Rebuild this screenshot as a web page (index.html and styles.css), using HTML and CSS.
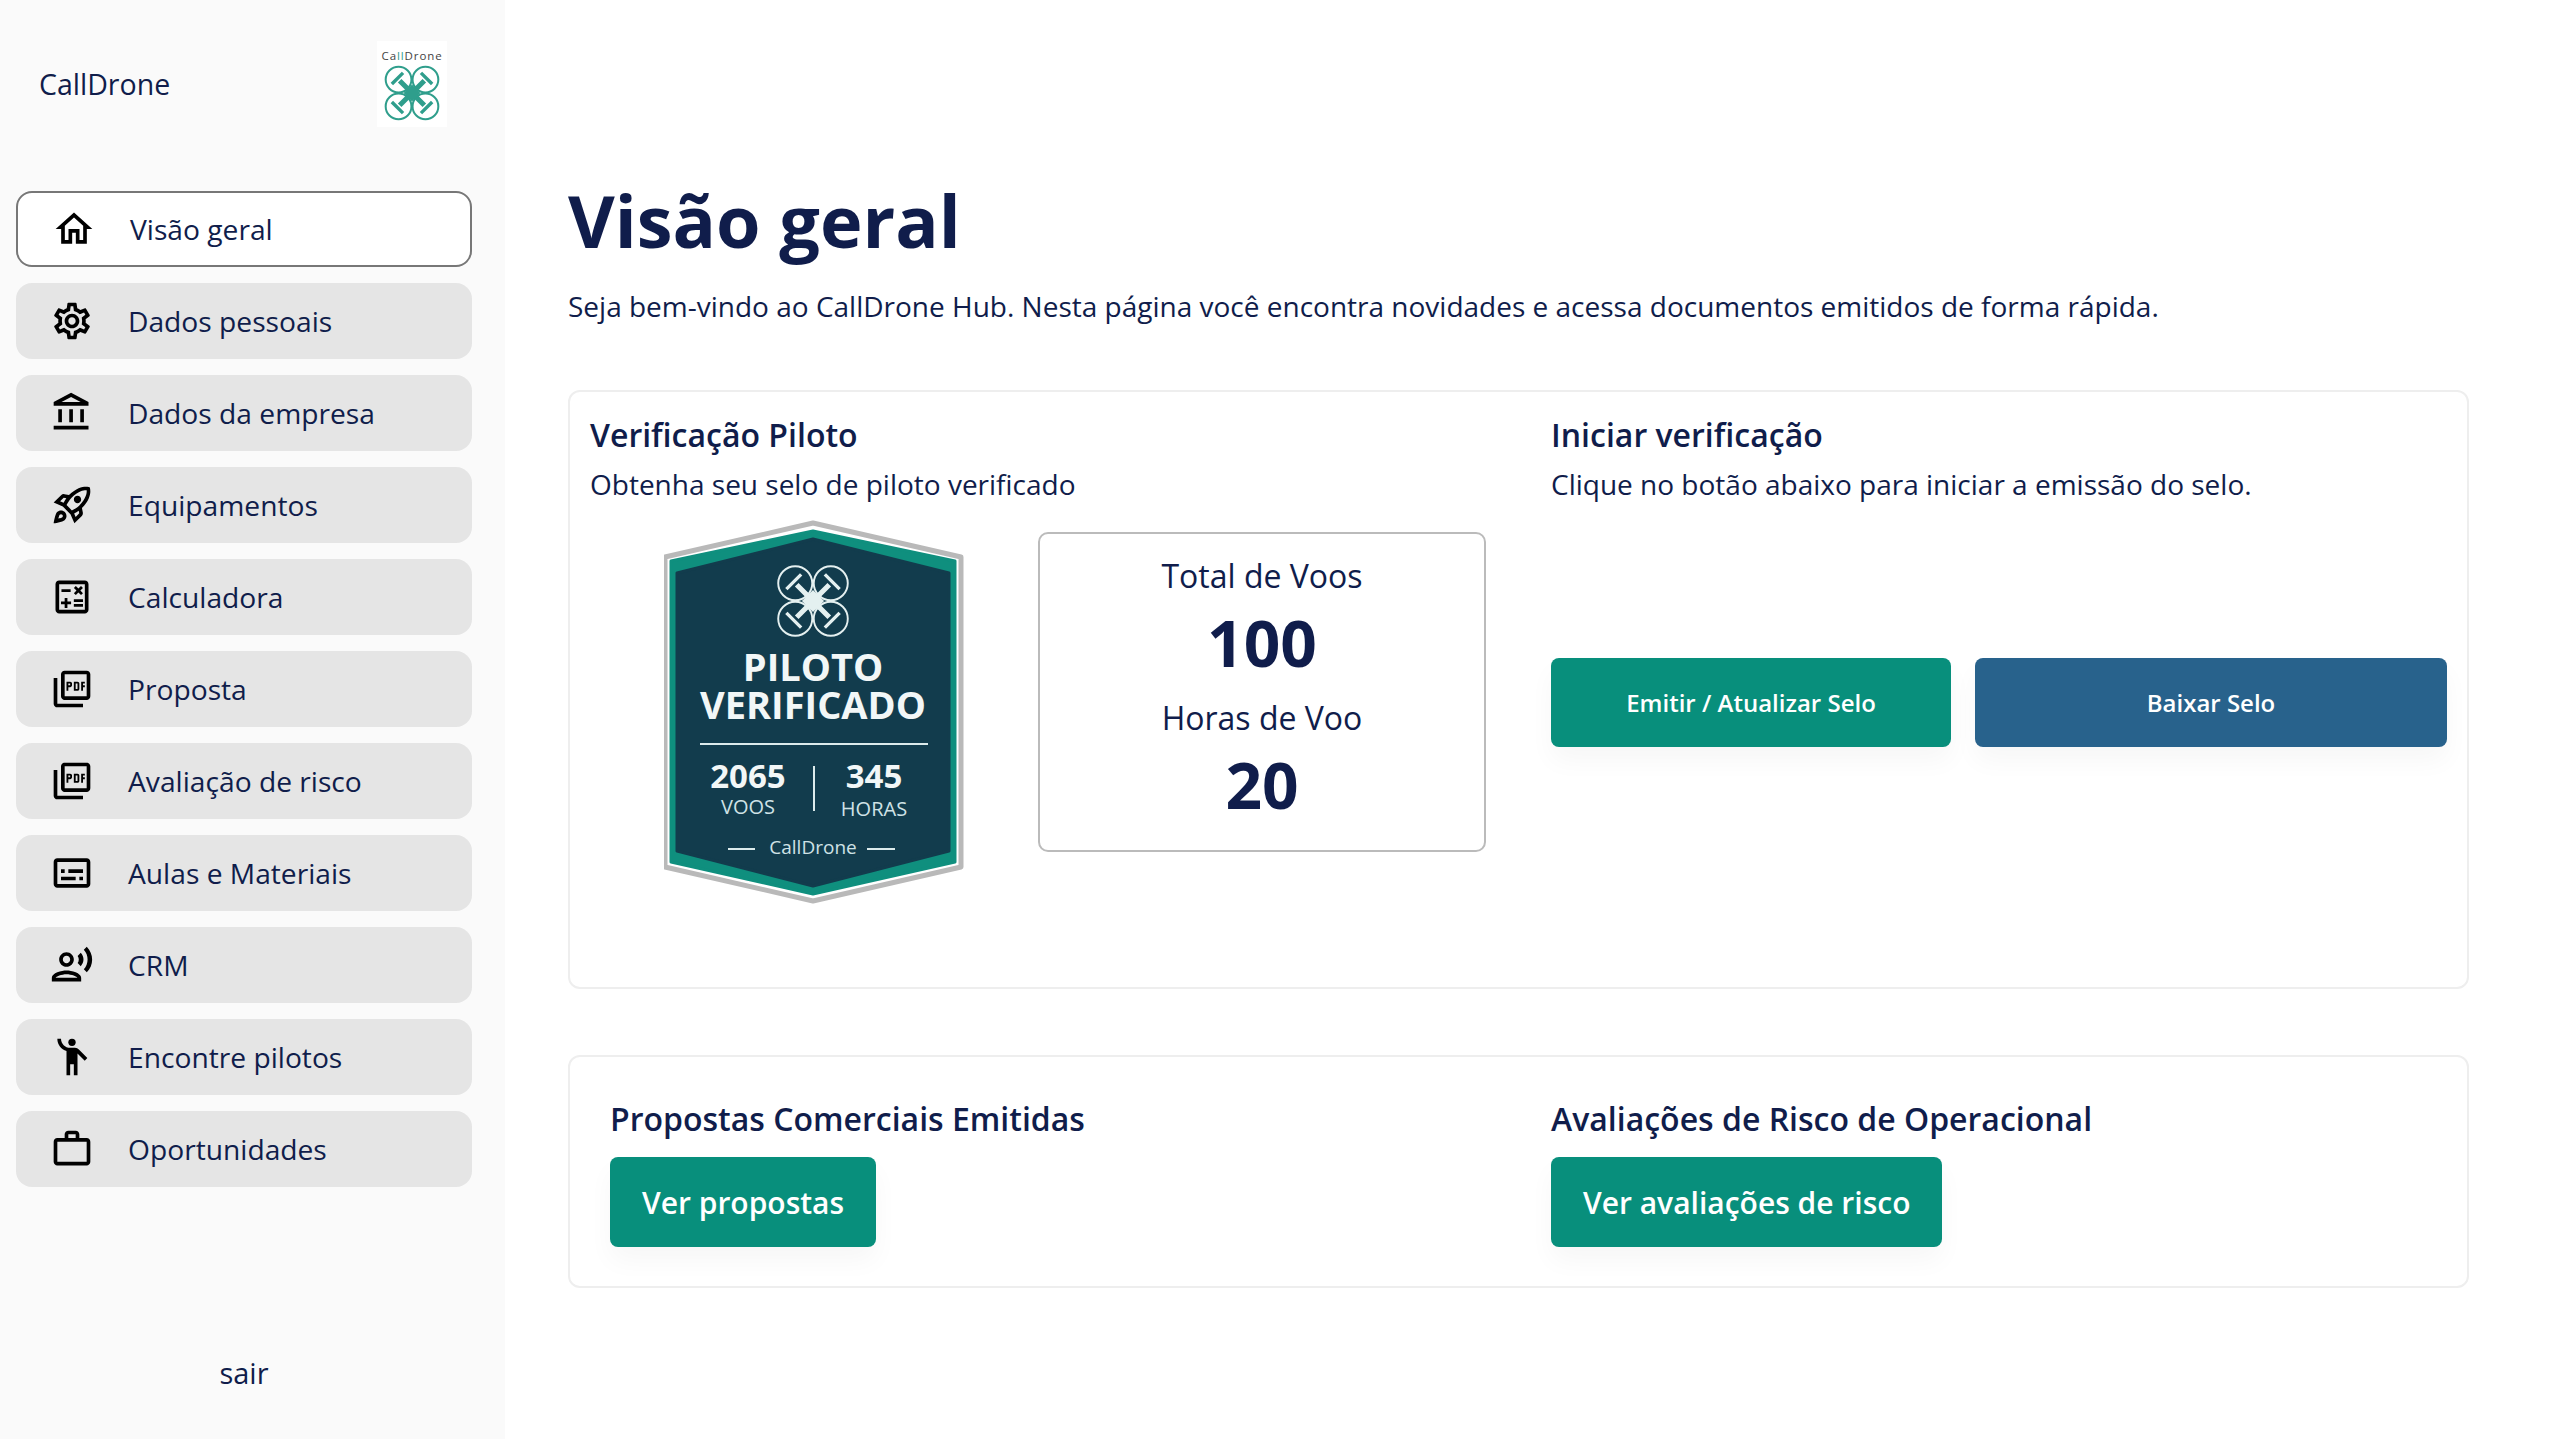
FILE: index.html
```html
<!DOCTYPE html>
<html lang="pt-BR">
<head>
  <meta charset="UTF-8">
  <meta name="viewport" content="width=device-width, initial-scale=1.0">
  <title>CallDrone Hub</title>
  <link rel="stylesheet" href="styles.css">
</head>
<body>
  <svg class="defs" width="0" height="0">
    <symbol id="drone" viewBox="0 0 100 100">
      <g fill="none" stroke="currentColor">
        <circle class="drone-ring" cx="26" cy="26" r="23"/>
        <circle class="drone-ring" cx="74" cy="26" r="23"/>
        <circle class="drone-ring" cx="26" cy="74" r="23"/>
        <circle class="drone-ring" cx="74" cy="74" r="23"/>
        <path class="drone-arm" d="M28 28L72 72M72 28L28 72"/>
        <path class="drone-blade" d="M14 34L34 14M66 14L86 34M14 66L34 86M66 86L86 66"/>
      </g>
      <path d="M50 35L65 50L50 65L35 50Z" fill="currentColor"/>
    </symbol>
  </svg>

  <div class="layout">
    <aside class="sidebar">
      <div class="brand">
        <span class="brand-name">CallDrone</span>
        <div class="logo">
          <span class="logo-text">Ca<b>ll</b>Drone</span>
          <svg class="logo-drone"><use href="#drone"/></svg>
        </div>
      </div>

      <nav class="nav">
        <a class="nav-item active">
          <svg class="icon" viewBox="0 0 24 24"><path d="M12 5.69l5 4.5V18h-2v-6H9v6H7v-7.81l5-4.5M12 3L2 12h3v8h6v-6h2v6h6v-8h3L12 3z"/></svg>
          Visão geral
        </a>
        <a class="nav-item">
          <svg class="icon" viewBox="0 0 24 24"><path d="M19.43 12.98c.04-.32.07-.64.07-.98 0-.34-.03-.66-.07-.98l2.11-1.65c.19-.15.24-.42.12-.64l-2-3.46c-.09-.16-.26-.25-.44-.25-.06 0-.12.01-.17.03l-2.49 1c-.52-.4-1.08-.73-1.69-.98l-.38-2.65C14.46 2.18 14.25 2 14 2h-4c-.25 0-.46.18-.49.42l-.38 2.65c-.61.25-1.17.59-1.69.98l-2.49-1c-.06-.02-.12-.03-.18-.03-.17 0-.34.09-.43.25l-2 3.46c-.13.22-.07.49.12.64l2.11 1.65c-.04.32-.07.65-.07.98 0 .33.03.66.07.98l-2.11 1.65c-.19.15-.24.42-.12.64l2 3.46c.09.16.26.25.44.25.06 0 .12-.01.17-.03l2.49-1c.52.4 1.08.73 1.69.98l.38 2.65c.03.24.24.42.49.42h4c.25 0 .46-.18.49-.42l.38-2.65c.61-.25 1.17-.59 1.69-.98l2.49 1c.06.02.12.03.18.03.17 0 .34-.09.43-.25l2-3.46c.12-.22.07-.49-.12-.64l-2.11-1.65zm-1.98-1.71c.04.31.05.52.05.73 0 .21-.02.43-.05.73l-.14 1.13.89.7 1.08.84-.7 1.21-1.27-.51-1.04-.42-.9.68c-.43.32-.84.56-1.25.73l-1.06.43-.16 1.13-.2 1.35h-1.4l-.19-1.35-.16-1.13-1.06-.43c-.43-.18-.83-.41-1.23-.71l-.91-.7-1.06.43-1.27.51-.7-1.21 1.08-.84.89-.7-.14-1.13c-.03-.31-.05-.54-.05-.74s.02-.43.05-.73l.14-1.13-.89-.7-1.08-.84.7-1.21 1.27.51 1.04.42.9-.68c.43-.32.84-.56 1.25-.73l1.06-.43.16-1.13.2-1.35h1.39l.19 1.35.16 1.13 1.06.43c.43.18.83.41 1.23.71l.91.7 1.06-.43 1.27-.51.7 1.21-1.07.85-.89.7.14 1.13zM12 8c-2.21 0-4 1.79-4 4s1.79 4 4 4 4-1.79 4-4-1.79-4-4-4zm0 6c-1.1 0-2-.9-2-2s.9-2 2-2 2 .9 2 2-.9 2-2 2z"/></svg>
          Dados pessoais
        </a>
        <a class="nav-item">
          <svg class="icon" viewBox="0 0 24 24"><path d="M6.5 10h-2v7h2v-7zm6 0h-2v7h2v-7zm8.5 9H2v2h19v-2zm-2.5-9h-2v7h2v-7zm-7-6.74L16.71 6H6.29l5.21-2.74m0-2.26L2 6v2h19V6l-9.5-5z"/></svg>
          Dados da empresa
        </a>
        <a class="nav-item">
          <svg class="icon" viewBox="0 0 24 24"><path d="M6 15c-.83 0-1.58.34-2.12.88C2.7 17.06 2 22 2 22s4.94-.7 6.12-1.88c.54-.54.88-1.29.88-2.12 0-1.66-1.34-3-3-3zm.71 3.71c-.28.28-2.17.76-2.17.76s.47-1.88.76-2.17c.17-.19.42-.3.7-.3.55 0 1 .45 1 1 0 .28-.11.53-.29.71zm10.71-5.06c6.36-6.36 4.24-11.31 4.24-11.31S16.71.22 10.35 6.58l-2.49-.5c-.65-.13-1.33.08-1.81.55L2 10.69l5 2.14L11.17 17l2.14 5 4.05-4.05c.47-.47.68-1.15.55-1.81l-.49-2.49zM7.41 10.83l-1.91-.82 1.97-1.97 1.44.29c-.57.83-1.08 1.7-1.5 2.5zm6.58 7.67l-.82-1.91c.8-.42 1.67-.93 2.49-1.5l.29 1.44-1.96 1.97zM16 12.24c-1.32 1.32-3.38 2.4-4.04 2.73l-2.93-2.93c.32-.65 1.4-2.71 2.73-4.04 4.68-4.68 8.23-3.99 8.23-3.99s.69 3.55-3.99 8.23zM15 11c1.1 0 2-.9 2-2s-.9-2-2-2-2 .9-2 2 .9 2 2 2z"/></svg>
          Equipamentos
        </a>
        <a class="nav-item">
          <svg class="icon" viewBox="0 0 24 24"><path d="M19 3H5c-1.1 0-2 .9-2 2v14c0 1.1.9 2 2 2h14c1.1 0 2-.9 2-2V5c0-1.1-.9-2-2-2zm0 16H5V5h14v14zM6.25 7.72h5v1.5h-5zM13 15.75h5v1.5h-5zM13 13.25h5v1.5h-5zM8 18h1.5v-2h2v-1.5h-2v-2H8v2H6V16h2zM14.09 10.95L15.5 9.54l1.41 1.41 1.06-1.06-1.41-1.42 1.41-1.41-1.06-1.06-1.41 1.41-1.41-1.41-1.06 1.06 1.41 1.41-1.41 1.42z"/></svg>
          Calculadora
        </a>
        <a class="nav-item">
          <svg class="icon" viewBox="0 0 24 24"><path d="M20 2H8c-1.1 0-2 .9-2 2v12c0 1.1.9 2 2 2h12c1.1 0 2-.9 2-2V4c0-1.1-.9-2-2-2zm0 14H8V4h12v12zM4 6H2v14c0 1.1.9 2 2 2h14v-2H4V6zm12 6v-3c0-.55-.45-1-1-1h-2v5h2c.55 0 1-.45 1-1zm-2-3h1v3h-1V9zm4 2h1v-1h-1V9h1V8h-2v5h1zm-8 0h1c.55 0 1-.45 1-1V9c0-.55-.45-1-1-1H9v5h1v-2zm0-2h1v1h-1V9z"/></svg>
          Proposta
        </a>
        <a class="nav-item">
          <svg class="icon" viewBox="0 0 24 24"><path d="M20 2H8c-1.1 0-2 .9-2 2v12c0 1.1.9 2 2 2h12c1.1 0 2-.9 2-2V4c0-1.1-.9-2-2-2zm0 14H8V4h12v12zM4 6H2v14c0 1.1.9 2 2 2h14v-2H4V6zm12 6v-3c0-.55-.45-1-1-1h-2v5h2c.55 0 1-.45 1-1zm-2-3h1v3h-1V9zm4 2h1v-1h-1V9h1V8h-2v5h1zm-8 0h1c.55 0 1-.45 1-1V9c0-.55-.45-1-1-1H9v5h1v-2zm0-2h1v1h-1V9z"/></svg>
          Avaliação de risco
        </a>
        <a class="nav-item">
          <svg class="icon" viewBox="0 0 24 24"><path d="M20 4H4c-1.1 0-2 .9-2 2v12c0 1.1.9 2 2 2h16c1.1 0 2-.9 2-2V6c0-1.1-.9-2-2-2zm0 14H4V6h16v12zM6 10h2v2H6zm0 4h8v2H6zm10 0h2v2h-2zm-6-4h8v2h-8z"/></svg>
          Aulas e Materiais
        </a>
        <a class="nav-item">
          <svg class="icon" viewBox="0 0 24 24"><path d="M9 13c2.21 0 4-1.79 4-4s-1.79-4-4-4-4 1.79-4 4 1.79 4 4 4zm0-6c1.1 0 2 .9 2 2s-.9 2-2 2-2-.9-2-2 .9-2 2-2zm0 8c-2.67 0-8 1.34-8 4v2h16v-2c0-2.66-5.33-4-8-4zm-6 4c.22-.72 3.31-2 6-2 2.7 0 5.8 1.29 6 2H3zM15.08 7.05c.84 1.18.84 2.71 0 3.89l1.68 1.69c2.02-2.02 2.02-5.07 0-7.27l-1.68 1.69zM20.07 2l-1.63 1.63c2.77 3.02 2.77 7.56 0 10.74L20.07 16c3.9-3.89 3.91-9.95 0-14z"/></svg>
          CRM
        </a>
        <a class="nav-item">
          <svg class="icon" viewBox="0 0 24 24"><circle cx="12" cy="4" r="2"/><path d="M15.89 8.11C15.5 7.72 14.83 7 13.53 7h-2.54C8.24 6.99 6 4.75 6 2H4c0 3.16 2.11 5.84 5 6.71V22h2v-6h2v6h2V10.05L18.95 14l1.41-1.41-4.47-4.48z"/></svg>
          Encontre pilotos
        </a>
        <a class="nav-item">
          <svg class="icon" viewBox="0 0 24 24"><path d="M20 6h-4V4c0-1.11-.89-2-2-2h-4c-1.11 0-2 .89-2 2v2H4c-1.11 0-1.99.89-1.99 2L2 19c0 1.11.89 2 2 2h16c1.11 0 2-.89 2-2V8c0-1.11-.89-2-2-2zm-6 0h-4V4h4v2zm6 13H4V8h16v11z"/></svg>
          Oportunidades
        </a>
      </nav>

      <a class="logout">sair</a>
    </aside>

    <main class="main">
      <h1>Visão geral</h1>
      <p class="intro">Seja bem-vindo ao CallDrone Hub. Nesta página você encontra novidades e acessa documentos emitidos de forma rápida.</p>

      <section class="card card-verify">
        <div class="col-left">
          <h2>Verificação Piloto</h2>
          <p class="sub">Obtenha seu selo de piloto verificado</p>
          <div class="seal-row">
            <svg class="seal" viewBox="0 0 300 384">
              <polygon class="seal-outer" points="149,3 297,37 297,347 149,381 1,347 1,37" />
              <polygon class="seal-green" points="149,11 291,41 291,342 149,374 7,342 7,41" />
              <polygon class="seal-dark" points="149,19 285,53 285,331 149,366 13,331 13,53" />
              <use href="#drone" x="111" y="44" width="76" height="74" class="seal-drone"/>
              <text x="149" y="161" class="seal-title">PILOTO</text>
              <text x="149" y="199" class="seal-title">VERIFICADO</text>
              <line x1="36" y1="224" x2="264" y2="224" class="seal-line"/>
              <text x="84" y="268" class="seal-num">2065</text>
              <text x="84" y="294" class="seal-label">VOOS</text>
              <line x1="150" y1="246" x2="150" y2="291" class="seal-line"/>
              <text x="210" y="268" class="seal-num">345</text>
              <text x="210" y="296" class="seal-label">HORAS</text>
              <line x1="64" y1="329" x2="91" y2="329" class="seal-line"/>
              <text x="149" y="334" class="seal-brand">CallDrone</text>
              <line x1="203" y1="329" x2="231" y2="329" class="seal-line"/>
            </svg>
            <div class="stats">
              <div class="stat-label">Total de Voos</div>
              <div class="stat-value">100</div>
              <div class="stat-label">Horas de Voo</div>
              <div class="stat-value">20</div>
            </div>
          </div>
        </div>
        <div class="col-right">
          <h2>Iniciar verificação</h2>
          <p class="sub">Clique no botão abaixo para iniciar a emissão do selo.</p>
          <div class="actions">
            <button class="btn btn-green">Emitir / Atualizar Selo</button>
            <button class="btn btn-blue">Baixar Selo</button>
          </div>
        </div>
      </section>

      <section class="card card-docs">
        <div class="doc-col">
          <h2>Propostas Comerciais Emitidas</h2>
          <button class="btn-big">Ver propostas</button>
        </div>
        <div class="doc-col">
          <h2>Avaliações de Risco de Operacional</h2>
          <button class="btn-big">Ver avaliações de risco</button>
        </div>
      </section>
    </main>
  </div>
</body>
</html>
```

FILE: styles.css
```css
* {
  box-sizing: border-box;
}
body {
  margin: 0;
  font-family: "Open Sans", sans-serif;
  color: #101d4b;
  background-color: #fff;
}
.defs {
  position: absolute;
}
.layout {
  display: flex;
  height: 1439px;
  overflow: hidden;
}

/* sidebar */
.sidebar {
  width: 505px;
  flex-shrink: 0;
  display: flex;
  flex-direction: column;
  padding: 0 33px 0 16px;
  background-color: #fafafa;
}
.brand {
  display: flex;
  align-items: center;
  justify-content: space-between;
  height: 191px;
  padding: 0 25px 23px 23px;
}
.brand-name {
  font-size: 28.5px;
  font-weight: 500;
}
.logo {
  width: 70px;
  height: 86px;
  display: flex;
  flex-direction: column;
  align-items: center;
  padding-top: 7px;
  background-color: #fff;
  --ring: 3.6;
  --arm: 9;
  --blade: 6;
}
.logo-text {
  font-size: 11.5px;
  line-height: 16px;
  color: #444;
  letter-spacing: 0.9px;
}
.logo-text b {
  font-weight: 400;
  color: #2f9e8c;
}
.logo-drone {
  width: 56px;
  height: 56px;
  margin-top: 1px;
  color: #2f9e8c;
}
.drone-ring {
  stroke-width: var(--ring, 2.6);
}
.drone-arm {
  stroke-width: var(--arm, 7);
}
.drone-blade {
  stroke-width: var(--blade, 4.5);
}
.nav {
  display: flex;
  flex-direction: column;
  gap: 16px;
}
.nav-item {
  display: flex;
  align-items: center;
  gap: 34px;
  height: 76px;
  padding: 0 0 1px 34px;
  font-size: 28.2px;
  font-weight: 500;
  border-radius: 16px;
  background-color: #e5e5e5;
}
.nav-item.active {
  background-color: #fff;
  border: 2px solid #777;
}
.icon {
  width: 44px;
  height: 44px;
  flex-shrink: 0;
  fill: #000;
}
.logout {
  margin-top: auto;
  padding-bottom: 44px;
  font-size: 29px;
  font-weight: 500;
  line-height: 44px;
  text-align: center;
}

/* main */
.main {
  flex: 1;
  padding: 170px 92px 0 63px;
}
h1 {
  margin: 0;
  font-size: 72px;
  font-weight: 700;
  line-height: 100px;
}
.intro {
  margin: 14px 0 0;
  font-size: 28px;
  line-height: 44px;
}
.card {
  display: flex;
  background-color: #fff;
  border: 2px solid #eee;
  border-radius: 12px;
}
.card-verify {
  height: 599px;
  margin-top: 62px;
  padding: 21px 20px 0 20px;
}
.col-left {
  width: 961px;
}
.col-right {
  flex: 1;
}
h2 {
  margin: 0;
  font-size: 32px;
  font-weight: 600;
  line-height: 44px;
}
.sub {
  margin: 5px 0 0;
  font-size: 28px;
  line-height: 44px;
}
.seal-row {
  display: flex;
  align-items: flex-start;
  gap: 74px;
  padding-left: 74px;
  margin-top: 14px;
}
.seal {
  width: 300px;
  height: 384px;
  flex-shrink: 0;
}
.seal-outer {
  fill: #fff;
  stroke: #b9b9b9;
  stroke-width: 5;
  stroke-linejoin: round;
}
.seal-green {
  fill: #0f8f7e;
  stroke: #0f8f7e;
  stroke-width: 3;
  stroke-linejoin: round;
}
.seal-dark {
  fill: #123c4d;
  stroke: #123c4d;
  stroke-width: 3;
  stroke-linejoin: round;
}
.seal-drone {
  color: #e4f0f0;
}
.seal text {
  text-anchor: middle;
  fill: #f2f7f7;
}
.seal-title {
  font-size: 38px;
  font-weight: 700;
}
.seal-num {
  font-size: 33px;
  font-weight: 700;
}
.seal-label {
  font-size: 20px;
}
.seal .seal-label,
.seal .seal-brand {
  fill: #cfe2e6;
}
.seal-brand {
  font-size: 19px;
}
.seal-line {
  stroke: #dcebec;
  stroke-width: 2;
}
.stats {
  width: 448px;
  height: 320px;
  margin-top: 12px;
  padding-top: 20px;
  text-align: center;
  background-color: #fff;
  border: 2px solid #bbb;
  border-radius: 10px;
}
.stat-label {
  font-size: 32px;
  line-height: 44px;
}
.stat-value {
  font-size: 64px;
  font-weight: 700;
  line-height: 90px;
  margin-bottom: 8px;
}
.actions {
  display: flex;
  gap: 24px;
  margin-top: 152px;
}
.btn {
  height: 89px;
  font-family: inherit;
  font-size: 24px;
  font-weight: 600;
  color: #fff;
  border: none;
  border-radius: 8px;
  box-shadow: 0 14px 26px rgba(0, 0, 0, 0.035);
}
.btn-green {
  width: 400px;
  background-color: #088f7c;
}
.btn-blue {
  width: 472px;
  background-color: #28628c;
}
.card-docs {
  height: 233px;
  margin-top: 66px;
  padding: 40px 0 0 40px;
}
.doc-col {
  width: 941px;
}
.doc-col:last-child {
  width: auto;
}
.btn-big {
  display: block;
  height: 90px;
  margin-top: 16px;
  padding: 0 32px;
  font-family: inherit;
  font-size: 30px;
  font-weight: 600;
  color: #fff;
  background-color: #088f7c;
  border: none;
  border-radius: 8px;
  box-shadow: 0 14px 26px rgba(0, 0, 0, 0.035);
}
```
